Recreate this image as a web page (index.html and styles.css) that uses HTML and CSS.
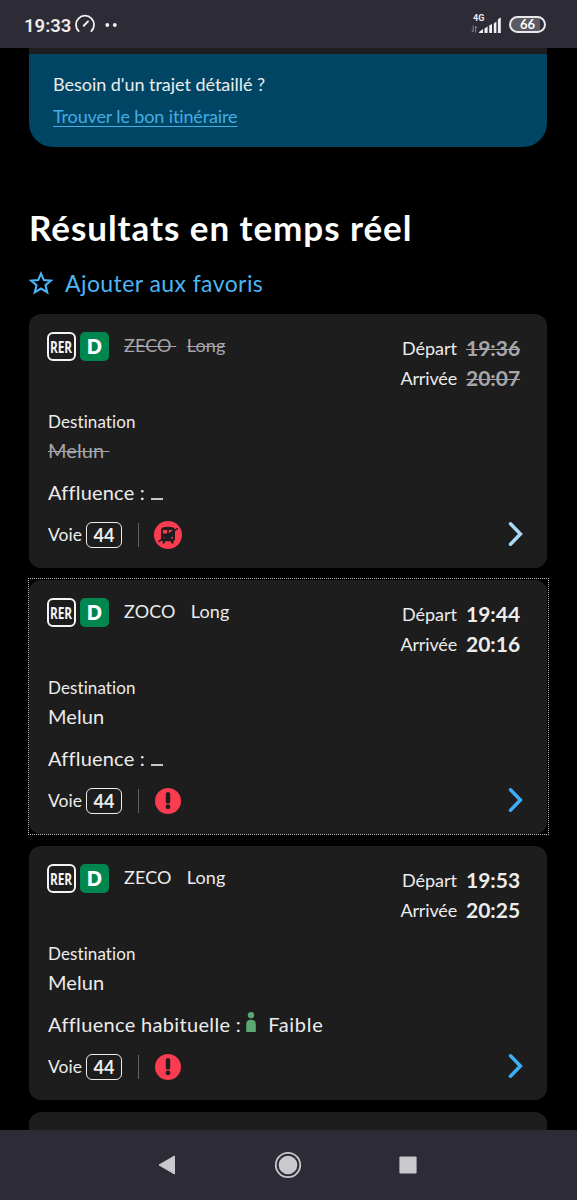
FILE: index.html
```html
<!DOCTYPE html>
<html lang="fr">
<head>
<meta charset="utf-8">
<title>Résultats en temps réel</title>
<link rel="stylesheet" href="styles.css">
</head>
<body>
<svg width="0" height="0" class="defs">
  <symbol id="chevron" viewBox="0 0 16 26"><path d="M2.5 2.8 L12.4 13 L2.5 23.2" fill="none" stroke="currentColor" stroke-width="3.5" stroke-linecap="round" stroke-linejoin="miter"/></symbol>
  <symbol id="alert" viewBox="0 0 28 28"><circle cx="14" cy="14" r="13" fill="#fa3c50"/><path d="M14 7.2V14.6" stroke="#1d1d1d" stroke-width="4.4" stroke-linecap="round"/><circle cx="14" cy="19.8" r="2.4" fill="#1d1d1d"/></symbol>
  <symbol id="cancelled" viewBox="0 0 28 28"><circle cx="14" cy="14" r="14" fill="#fa3c50"/><path d="M8.5 6.6Q14 5 19.5 6.6Q21 7.2 21 9.5V18Q21 19.6 19.6 19.8L19.4 22.4H17.4L16.8 20.2H11.2L10.6 22.4H8.6L8.4 19.8Q7 19.6 7 18V9.5Q7 7.2 8.5 6.6Z" fill="#1d1d1d"/><path d="M9 9H13.2V12.6H9ZM14.8 9H19L14.8 12.4Z" fill="#fa3c50"/><circle cx="10" cy="16.8" r="1" fill="#fa3c50"/><circle cx="18" cy="16.8" r="1" fill="#fa3c50"/><path d="M5 20.4L23.4 7.6" stroke="#1d1d1d" stroke-width="1.5" stroke-linecap="round"/></symbol>
</svg>

<div class="screen">
  <header class="status">
    <span class="clock">19:33</span>
    <svg class="gauge" width="22" height="20" viewBox="0 0 22 20"><path d="M4.6 17A9 9 0 1 1 17.4 17" fill="none" stroke="#f2f2f2" stroke-width="1.8" stroke-linecap="round"/><path d="M9.8 11.8L14 7.4" stroke="#f2f2f2" stroke-width="2" stroke-linecap="round"/></svg>
    <svg class="dots" width="13" height="4" viewBox="0 0 13 4"><circle cx="2.3" cy="2" r="1.9" fill="#f2f2f2"/><circle cx="9.8" cy="2" r="1.9" fill="#f2f2f2"/></svg>
    <div class="network">
      <span class="net-type">4G</span>
      <svg class="arrows" width="7" height="8" viewBox="0 0 7 8"><path d="M2.2 .5V6.8L.6 5M4.6 7.5V1.2L6.2 3" stroke="#85848c" stroke-width="1" fill="none"/></svg>
    </div>
    <svg class="signal" width="23" height="16" viewBox="0 0 23 16"><path d="M0 16V15L4 12V16ZM5.5 16V11.5L8.6 9.5V16ZM10.2 8.6L13 7V16H10.2ZM14.8 6.5L17.4 4.6V16H14.8ZM18.9 2.2L21.8 .4V16H18.9Z" fill="#f0f0f0"/></svg>
    <span class="battery">66</span>
  </header>

  <main class="page">
    <section class="promo">
      <p class="promo-title">Besoin d'un trajet détaillé ?</p>
      <a class="promo-link">Trouver le bon itinéraire</a>
    </section>
    <h1 class="title">Résultats en temps réel</h1>
    <div class="favorite">
      <svg width="24" height="24" viewBox="0 0 24 24"><path d="M12 2.6L14.8 9.1L21.8 9.7L16.5 14.2L18.2 21.4L12 17.6L5.8 21.4L7.5 14.2L2.2 9.7L9.2 9.1Z" fill="none" stroke="#4cb5f5" stroke-width="2.1" stroke-linejoin="miter"/></svg>
      <span>Ajouter aux favoris</span>
    </div>

    <div class="cards">
      <article class="card cancelled">
        <div class="top">
          <span class="rer"><span>RER</span></span><span class="line">D</span>
          <span class="train"><span class="struck mission">ZECO </span><span class="struck size">Long</span></span>
          <div class="times"><span class="dep">Départ</span><b class="struck">19:36</b><span class="arr">Arrivée</span><b class="struck">20:07</b></div>
        </div>
        <div class="label">Destination</div>
        <div class="place"><span class="struck">Melun </span></div>
        <div class="crowd"><span class="crowd-label">Affluence :</span><i class="unknown"></i></div>
        <div class="bottom"><span class="voie">Voie</span><span class="track">44</span><i class="rule"></i><svg width="28" height="28"><use href="#cancelled"/></svg><svg class="chevron" width="16" height="26"><use href="#chevron"/></svg></div>
      </article>

      <article class="card focused">
        <div class="top">
          <span class="rer"><span>RER</span></span><span class="line">D</span>
          <span class="train"><span class="mission">ZOCO </span><span class="size">Long</span></span>
          <div class="times"><span class="dep">Départ</span><b>19:44</b><span class="arr">Arrivée</span><b>20:16</b></div>
        </div>
        <div class="label">Destination</div>
        <div class="place">Melun</div>
        <div class="crowd"><span class="crowd-label">Affluence :</span><i class="unknown"></i></div>
        <div class="bottom"><span class="voie">Voie</span><span class="track">44</span><i class="rule"></i><svg width="28" height="28"><use href="#alert"/></svg><svg class="chevron" width="16" height="26"><use href="#chevron"/></svg></div>
      </article>

      <article class="card">
        <div class="top">
          <span class="rer"><span>RER</span></span><span class="line">D</span>
          <span class="train"><span class="mission">ZECO </span><span class="size">Long</span></span>
          <div class="times"><span class="dep">Départ</span><b>19:53</b><span class="arr">Arrivée</span><b>20:25</b></div>
        </div>
        <div class="label">Destination</div>
        <div class="place">Melun</div>
        <div class="crowd"><span class="crowd-label usual">Affluence habituelle :</span><svg class="person" width="10" height="20" viewBox="0 0 10 20"><circle cx="5" cy="3.2" r="3.2" fill="#5ba872"/><path d="M.2 20V12Q.2 7.7 5 7.7Q9.8 7.7 9.8 12V20Z" fill="#5ba872"/></svg><span class="level">Faible</span></div>
        <div class="bottom"><span class="voie">Voie</span><span class="track">44</span><i class="rule"></i><svg width="28" height="28"><use href="#alert"/></svg><svg class="chevron" width="16" height="26"><use href="#chevron"/></svg></div>
      </article>

      <article class="card"></article>
    </div>
  </main>

  <nav class="nav">
    <svg width="20" height="22" viewBox="0 0 20 22"><path d="M2 11L17.5 2V20Z" fill="#c9c8cc" stroke="#c9c8cc" stroke-linejoin="round"/></svg>
    <svg width="28" height="28" viewBox="0 0 28 28"><circle cx="14" cy="14" r="12.2" fill="none" stroke="#c9c8cc" stroke-width="1.8"/><circle cx="14" cy="14" r="9.3" fill="#c9c8cc"/></svg>
    <svg width="18" height="18" viewBox="0 0 18 18"><rect x=".4" y=".4" width="17.2" height="17.2" rx="1" fill="#c9c8cc"/></svg>
  </nav>
</div>
</body>
</html>
```

FILE: styles.css
```css
* { box-sizing: border-box; }
body { margin: 0; background: #000; color: #ececec; font-family: Lato, "Liberation Sans", sans-serif; }
svg { display: block; flex: none; }
.defs { position: absolute; }
.screen { width: 577px; height: 1200px; display: flex; flex-direction: column; overflow: hidden; }

.status { height: 48px; flex: none; background: #2d2b35; display: flex; align-items: center; padding: 3px 31px 0 24px; }
.clock { font: 600 18.5px/24px Roboto, sans-serif; width: 50px; white-space: nowrap; }
.gauge { margin-top: -3px; }
.dots { margin: -1px 0 0 9px; }
.network { display: flex; flex-direction: column; margin-left: auto; width: 13px; height: 20px; margin-right: -5px; }
.net-type { font: 700 9px/9px Roboto, sans-serif; margin: -2px 0 0 2px; white-space: nowrap; }
.arrows { margin-top: 2px; }
.signal { margin-top: -1px; }
.battery { width: 37px; height: 17px; margin: -2px 0 0 7px; border: 2px solid #e8e8e8; border-radius: 9px; background: linear-gradient(90deg, #5b5a62 88%, #2d2b35 88%); font: 700 13px/13px Lato, sans-serif; text-align: center; color: #fff; }

.page { flex: 1; min-height: 0; overflow: hidden; padding: 0 30px 0 29px; }
.promo { height: 99px; padding: 16px 24px 0; border-top: 6px solid #1d1d1d; border-radius: 0 0 24px 24px; background: #004664; }
.promo-title { margin: 0; font-size: 18px; line-height: 28px; letter-spacing: -.03px; }
.promo-link { display: inline-block; margin-top: 3px; font-size: 18px; line-height: 30px; color: #43ade6; text-decoration: underline; text-decoration-thickness: 1px; text-underline-offset: 3px; letter-spacing: -.13px; }
.title { margin: 58px 0 0; font-size: 35px; line-height: 44px; font-weight: 700; color: #fff; letter-spacing: .95px; white-space: nowrap; }
.favorite { display: flex; align-items: center; height: 30px; margin-top: 19px; gap: 12px; font-size: 23px; line-height: 30px; color: #4cb5f5; letter-spacing: .42px; }

.cards { display: flex; flex-direction: column; gap: 12px; margin-top: 16px; }
.card { height: 254px; flex: none; padding: 18px 23px 19px 19px; border-radius: 12px; background: #1d1d1d; }
.focused { position: relative; }
.focused::after { content: ""; position: absolute; inset: -2px -2px -1px -1px; border: 1px dotted #bbb; pointer-events: none; }
.top { display: flex; height: 78px; margin-left: -1px; }
.rer { display: flex; align-items: center; justify-content: center; width: 29px; height: 29px; border: 2px solid #f4f4f4; border-radius: 6px; font: 700 16px/24px "Open Sans", sans-serif; color: #f4f4f4; }
.rer span { transform: scaleX(.74); }
.line { width: 29px; height: 29px; margin-left: 4px; border-radius: 5px; background: #008750; font: 700 22px/27px "Open Sans", sans-serif; text-align: center; color: #fff; }
.train { display: flex; margin-left: 15px; font-size: 18px; line-height: 26px; letter-spacing: .1px; white-space: pre; }
.size { margin-left: 10.5px; }
.times { display: grid; grid-template-columns: auto 54px; column-gap: 9px; grid-auto-rows: 30px; margin: 1px 4px 0 auto; line-height: 30px; font-size: 18px; text-align: right; white-space: nowrap; }
.times b { font-size: 21px; text-align: left; }
.arr { letter-spacing: -.15px; }
.struck { color: #a6a6aa; text-decoration: line-through; text-decoration-thickness: 1px; }
.label { font-size: 17px; line-height: 24px; letter-spacing: .1px; font-variant-ligatures: none; }
.place { margin-top: 1px; font-size: 20px; line-height: 30px; letter-spacing: .1px; white-space: pre; }
.crowd { display: flex; height: 30px; margin-top: 12px; font-size: 20px; line-height: 30px; letter-spacing: .2px; white-space: nowrap; }
.usual { letter-spacing: .33px; }
.unknown { width: 12px; height: 2px; margin: 21px 0 0 6px; background: #c8c8c8; }
.person { margin: 3px 0 0 5px; }
.level { margin-left: 12px; letter-spacing: .7px; }
.bottom { display: flex; align-items: center; height: 28px; margin-top: 14px; }
.voie { width: 38px; font-size: 17.5px; line-height: 28px; }
.track { width: 36px; height: 26px; margin-top: -1px; border: 1.5px solid #eee; border-radius: 6px; text-align: center; font-weight: 700; font-size: 18px; line-height: 24px; }
.rule { width: 1px; height: 24px; margin: 0 15px 0 16px; background: #626262; }
.chevron { margin-left: auto; color: #3aaef8; margin-top: -3px; }
.cancelled .chevron { color: #a9daf7; }

.nav { height: 70px; flex: none; background: #2d2b35; display: flex; align-items: center; justify-content: space-between; padding: 0 160px 0 157px; }
```
